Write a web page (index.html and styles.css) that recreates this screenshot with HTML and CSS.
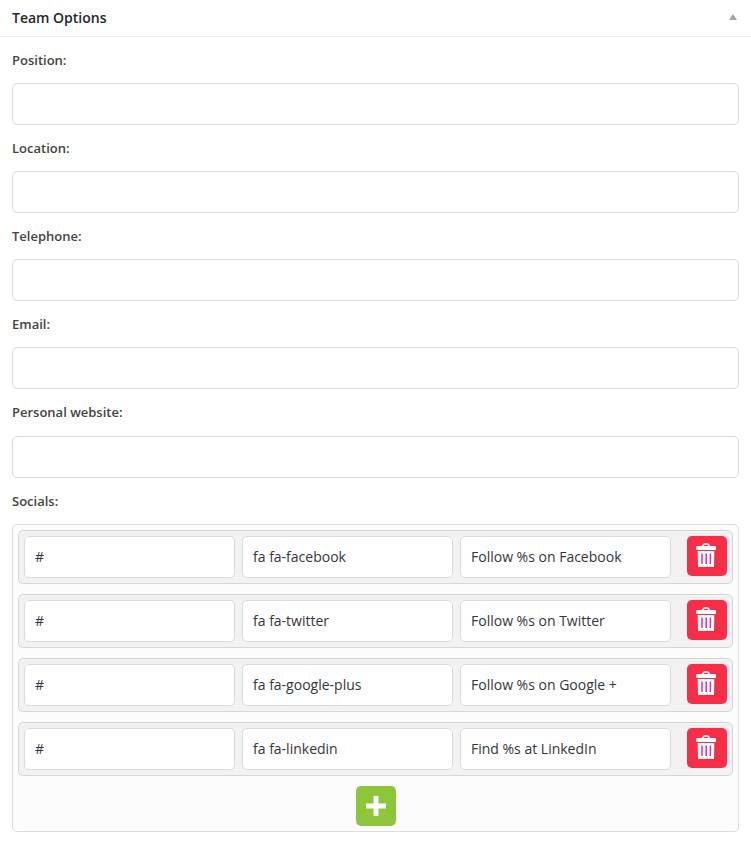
FILE: index.html
```html
<!DOCTYPE html>
<html lang="en">
<head>
<meta charset="utf-8">
<title>Team Options</title>
<link rel="stylesheet" href="styles.css">
</head>
<body>
<svg class="defs" width="0" height="0">
<symbol id="trash" viewBox="0 0 20 24"><path fill="#fff" fill-rule="evenodd" d="M0 4q0-1 1-1h5Q6.500 0 10 0t4 3h5q1 0 1 1v3H0zM7.500 3h5q-.5-1.500-2.500-1.500T7.500 3zM1.700 8h16.600l-.3 16H2z"/><path stroke="#f62e78" stroke-width="1.500" d="M6 10.500v10.500M10.200 10.500v10.500M14.400 10.500v10.500"/></symbol>
</svg>
<header class="head"><h1>Team Options</h1><span class="arrow"></span></header>
<main class="panel">
<label class="field"><span>Position:</span><input type="text"></label>
<label class="field"><span>Location:</span><input type="text"></label>
<label class="field"><span>Telephone:</span><input type="text"></label>
<label class="field"><span>Email:</span><input type="text"></label>
<label class="field last"><span>Personal website:</span><input type="text"></label>
<h2>Socials:</h2>
<section class="socials">
<div class="row"><div class="box">#</div><div class="box">fa fa-facebook</div><div class="box">Follow %s on Facebook</div><button class="del" aria-label="Delete"><svg><use href="#trash"/></svg></button></div>
<div class="row"><div class="box">#</div><div class="box">fa fa-twitter</div><div class="box">Follow %s on Twitter</div><button class="del" aria-label="Delete"><svg><use href="#trash"/></svg></button></div>
<div class="row"><div class="box">#</div><div class="box">fa fa-google-plus</div><div class="box">Follow %s on Google +</div><button class="del" aria-label="Delete"><svg><use href="#trash"/></svg></button></div>
<div class="row"><div class="box">#</div><div class="box">fa fa-linkedin</div><div class="box">Find %s at LinkedIn</div><button class="del" aria-label="Delete"><svg><use href="#trash"/></svg></button></div>
<button class="add" aria-label="Add"><svg viewBox="0 0 20 20"><path d="M7.500 0h5v7.500H20v5h-7.500V20h-5v-7.500H0v-5h7.500z" fill="#fff"/></svg></button>
</section>
</main>
</body>
</html>
```
FILE: styles.css
```css
* { box-sizing: border-box; }
body { margin: 0; background: #fff; color: #444; font: 13px/20px "Open Sans", sans-serif; }
.defs { display: none; }
.head { height: 37px; padding: 0 12px; display: flex; align-items: center; justify-content: space-between; border-bottom: 1px solid #eee; }
h1 { margin: 0; font-size: 14px; line-height: 20px; font-weight: 600; color: #23282d; }
.arrow { margin: 0 2px 2px 0; border: 4px solid transparent; border-top: 0; border-bottom: 6px solid #a0a5aa; }
.panel { padding: 13px 12px 0; }
.field { display: block; height: 88px; font-weight: 600; }
.field.last { height: 89px; }
.field span, h2 { display: block; height: 20px; margin: 0 0 13px; font-size: 13px; line-height: 20px; font-weight: 600; }
.field input { display: block; width: 100%; height: 42px; border: 1px solid #dadada; border-radius: 5px; }
.field.last span { margin-bottom: 14px; }
.socials { height: 308px; padding: 5px; border: 1px solid #ddd; border-radius: 5px; background: #fcfcfc; }
.row { display: flex; gap: 7px; height: 54px; padding: 5px; margin-bottom: 10px; border: 1px solid #d6d6d6; border-radius: 5px; background: #f2f2f2; }
.box { width: 211px; height: 42px; padding: 0 10px; border: 1px solid #dadada; border-radius: 5px; background: #fff; color: #32373c; font-size: 14px; line-height: 40px; }
button { display: flex; align-items: center; justify-content: center; width: 40px; height: 40px; padding: 0; border: 0; border-radius: 5px; }
.del { margin-left: 9px; padding: 0 2px 2px 0; background: #f82e46; }
.del svg { width: 20px; height: 24px; }
.add { margin: 0 auto; background: #8dc63a; }
.add svg { width: 20px; height: 20px; }
```
